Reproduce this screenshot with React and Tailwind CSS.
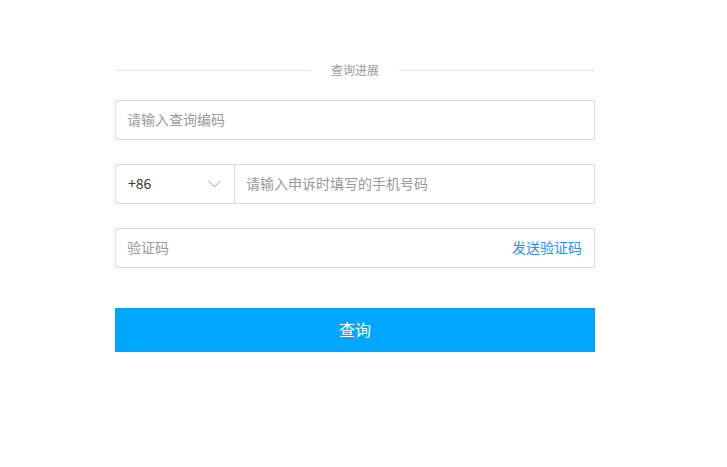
import React from 'react';

const font = { fontFamily: '"Microsoft YaHei", "Noto Sans CJK SC", sans-serif' };

export default function App() {
  return (
    <div className="min-h-screen bg-white" style={font}>
      <div className="w-[480px] ml-[115px] pt-[62px]">
        {/* title with divider */}
        <div className="flex items-center h-[16px]">
          <div className="flex-1 h-px bg-[#e5e5e5]" />
          <span className="px-[20px] text-[12px] leading-[16px] text-[#999] -mt-px">查询进展</span>
          <div className="flex-1 h-px bg-[#e5e5e5]" />
        </div>

        {/* query code */}
        <div className="mt-[22px] h-[40px] border border-[#ddd] flex items-center px-[11px] pb-[2px]">
          <input
            className="w-full outline-none text-[14px] text-[#333] placeholder:text-[#999] bg-transparent"
            placeholder="请输入查询编码"
          />
        </div>

        {/* phone */}
        <div className="mt-[24px] h-[40px] border border-[#ddd] flex">
          <div className="w-[119px] border-r border-[#ddd] flex items-center justify-between pl-[12px] pr-[13px]">
            <span className="text-[14px] text-[#333] -mt-[2px]">+86</span>
            <svg width="13" height="8" viewBox="0 0 13 8" fill="none">
              <path d="M0.5 0.8 L6.5 6.8 L12.5 0.8" stroke="#999" strokeWidth="1" />
            </svg>
          </div>
          <div className="flex-1 flex items-center px-[11px] pb-[2px]">
            <input
              className="w-full outline-none text-[14px] text-[#333] placeholder:text-[#999] bg-transparent"
              placeholder="请输入申诉时填写的手机号码"
            />
          </div>
        </div>

        {/* verification code */}
        <div className="mt-[24px] h-[40px] border border-[#ddd] flex items-center pl-[11px] pr-[12px] pb-[2px]">
          <input
            className="flex-1 outline-none text-[14px] text-[#333] placeholder:text-[#999] bg-transparent"
            placeholder="验证码"
          />
          <button className="text-[14px] text-[#2b8ff5] cursor-pointer">发送验证码</button>
        </div>

        <button className="mt-[40px] w-full h-[44px] pb-[3px] bg-[#00a6ff] text-white text-[16px] cursor-pointer">
          查询
        </button>
      </div>
    </div>
  );
}
